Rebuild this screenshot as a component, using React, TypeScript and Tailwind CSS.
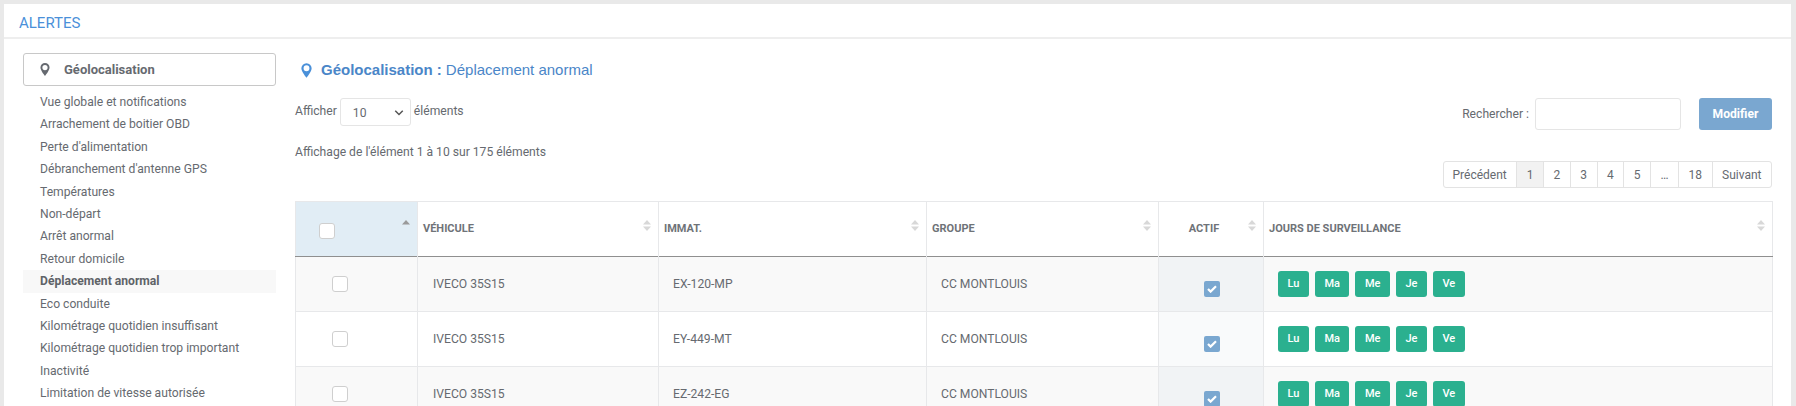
const menu = [
  "Vue globale et notifications",
  "Arrachement de boitier OBD",
  "Perte d'alimentation",
  "Débranchement d'antenne GPS",
  "Températures",
  "Non-départ",
  "Arrêt anormal",
  "Retour domicile",
  "Déplacement anormal",
  "Eco conduite",
  "Kilométrage quotidien insuffisant",
  "Kilométrage quotidien trop important",
  "Inactivité",
  "Limitation de vitesse autorisée",
];

const rows = [
  ["IVECO 35S15", "EX-120-MP"],
  ["IVECO 35S15", "EY-449-MT"],
  ["IVECO 35S15", "EZ-242-EG"],
];

const days = ["Lu", "Ma", "Me", "Je", "Ve"];
const pages = ["Précédent", "1", "2", "3", "4", "5", "…", "18", "Suivant"];

function Pin({ className }: { className: string }) {
  return (
    <svg viewBox="0 0 12 16" className={className} fill="currentColor">
      <path
        fillRule="evenodd"
        d="M6 0a5.6 5.6 0 0 0-5.6 5.6C.4 9.4 6 16 6 16s5.6-6.6 5.6-10.4A5.6 5.6 0 0 0 6 0Zm0 2.4a3.2 3.2 0 1 1 0 6.4 3.2 3.2 0 0 1 0-6.4Z"
      />
    </svg>
  );
}

function Sort({ active = false }: { active?: boolean }) {
  return (
    <svg viewBox="0 0 8 11" className="absolute right-[7px] top-[18px] h-[11px] w-[8px]">
      <path d="M0 4.5 4 0l4 4.5Z" fill={active ? "#9a9a9a" : "#d8d8d8"} />
      {!active && <path d="M0 6.5 4 11l4-4.5Z" fill="#d8d8d8" />}
    </svg>
  );
}

function Box({ className = "" }: { className?: string }) {
  return <span className={`block h-4 w-4 rounded-[3px] border border-[#cfcfcf] bg-white ${className}`} />;
}

function Head({ label, className = "", active = false }: { label: string; className?: string; active?: boolean }) {
  return (
    <th className={`relative border-r border-[#e7e8ea] px-[5px] text-left align-middle text-[11px] font-bold uppercase text-[#6f7378] ${className}`}>
      {label}
      <Sort active={active} />
    </th>
  );
}

export default function App() {
  return (
    <div className="h-[406px] w-[1796px] overflow-hidden bg-[#e9e9e9] pl-1 pr-[5px] pt-1 font-['Roboto',sans-serif] text-[12.13px] text-[#666a70]">
      <div className="h-full bg-white">
        <div className="flex h-[35px] items-center border-b-2 border-[#eeeeee] pl-[15px] pt-[5px] text-[15px] text-[#4a90d9]">ALERTES</div>
        <div className="flex pl-[19px] pr-[19px] pt-[14px]">
          <aside className="w-[253px] shrink-0">
            <div className="flex h-[33px] items-center rounded-[3px] border border-[#c8c8c8] pl-4 text-[13px] font-bold text-[#666a70]">
              <Pin className="h-[13px] w-[10px] text-[#666a70]" />
              <span className="ml-[14px]">Géolocalisation</span>
            </div>
            <ul className="mt-[5px]">
              {menu.map((m) => (
                <li
                  key={m}
                  className={`flex h-[22.4px] items-center pl-[17px] ${m === "Déplacement anormal" ? "bg-[#f8f8f8] font-bold text-[#5f6368]" : ""}`}
                >
                  {m}
                </li>
              ))}
            </ul>
          </aside>

          <main className="ml-[19px] min-w-0 flex-1">
            <div className="flex h-[33px] items-center pt-[2px] font-['Liberation_Sans',sans-serif] text-[15px] text-[#4a86c8]">
              <Pin className="ml-[6px] h-[15px] w-[11px] text-[#4a90d9]" />
              <span className="ml-[9px] font-bold">Géolocalisation :</span>
              <span className="ml-1">Déplacement anormal</span>
            </div>

            <div className="mt-3 flex items-start justify-between">
              <div className="flex items-start">
                <span className="mt-[4px]">Afficher</span>
                <span className="relative ml-[3px] flex h-7 w-[71px] items-center rounded-[3px] border border-[#e5e5e5] pl-3 pt-[3px]">
                  10
                  <svg viewBox="0 0 12 8" className="absolute right-[6px] top-[11px] h-[6px] w-[10px]" fill="none" stroke="#555" strokeWidth="2">
                    <path d="m1 1 5 5 5-5" />
                  </svg>
                </span>
                <span className="ml-[3px] mt-[4px]">éléments</span>
              </div>
              <div className="flex items-start">
                <span className="mt-[7px]">Rechercher :</span>
                <span className="ml-[6px] block h-8 w-[146px] rounded-[3px] border border-[#e5e5e5]" />
                <span className="ml-[18px] flex h-8 w-[73px] items-center justify-center rounded-[3px] bg-[#7aa7d0] font-bold text-white">Modifier</span>
              </div>
            </div>

            <div className="flex items-start justify-between">
              <div className="mt-[13px]">Affichage de l'élément 1 à 10 sur 175 éléments</div>
              <div className="mt-[31px] flex h-[27px] overflow-hidden rounded-[3px] border border-[#e3e3e3] text-xs">
                {pages.map((p) => (
                  <span
                    key={p}
                    className={`flex items-center border-r border-[#e3e3e3] px-[9.5px] last:border-r-0 ${p === "1" ? "bg-[#f2f2f2]" : ""} ${p === "Précédent" ? "pl-[9px]" : ""}`}
                  >
                    {p}
                  </span>
                ))}
              </div>
            </div>

            <table className="mt-[13px] w-[1477px] table-fixed border-collapse border-x border-t border-[#e7e8ea]">
              <colgroup>
                <col className="w-[122px]" />
                <col className="w-[241px]" />
                <col className="w-[268px]" />
                <col className="w-[232px]" />
                <col className="w-[105px]" />
                <col className="w-[509px]" />
              </colgroup>
              <thead>
                <tr className="h-[55px] border-b border-[#8f8f8f]">
                  <th className="relative border-r border-[#e7e8ea] bg-[#e1edf5]">
                    <Box className="ml-[23px] mt-1" />
                    <Sort active />
                  </th>
                  <Head label="Véhicule" />
                  <Head label="Immat." />
                  <Head label="Groupe" />
                  <th className="relative border-r border-[#e7e8ea] pr-[14px] text-center text-[11px] font-bold uppercase text-[#6f7378]">
                    Actif
                    <Sort />
                  </th>
                  <Head label="Jours de surveillance" className="border-r-0" />
                </tr>
              </thead>
              <tbody>
                {rows.map((r, i) => (
                  <tr key={r[1]} className={`h-[55px] border-b border-[#e7e8ea] ${i % 2 === 0 ? "bg-[#f9f9f9]" : "bg-white"}`}>
                    <td className="border-r border-[#e7e8ea]">
                      <Box className="ml-[36px]" />
                    </td>
                    <td className="border-r border-[#e7e8ea] pl-[15px]">{r[0]}</td>
                    <td className="border-r border-[#e7e8ea] pl-[14px]">{r[1]}</td>
                    <td className="border-r border-[#e7e8ea] pl-[14px]">CC MONTLOUIS</td>
                    <td className={`border-r border-[#e7e8ea] ${i % 2 === 0 ? "bg-[#f1f3f5]" : "bg-[#f9fafb]"}`}>
                      <span className="ml-[45px] mt-[10px] flex h-4 w-4 items-center justify-center rounded-[2px] bg-[#7aa7d0]">
                        <svg viewBox="0 0 10 8" className="h-2 w-[10px]" fill="none" stroke="#fff" strokeWidth="2.2">
                          <path d="m1 4 2.6 2.6L9 1.2" />
                        </svg>
                      </span>
                    </td>
                    <td className="pl-[14px]">
                      <div className="flex gap-[6px]">
                        {days.map((d) => (
                          <span key={d} className="flex h-[26px] items-center justify-center rounded-[3px] bg-[#2bb08f] px-[9.5px] text-[11px] font-medium text-white">
                            {d}
                          </span>
                        ))}
                      </div>
                    </td>
                  </tr>
                ))}
              </tbody>
            </table>
          </main>
        </div>
      </div>
    </div>
  );
}
